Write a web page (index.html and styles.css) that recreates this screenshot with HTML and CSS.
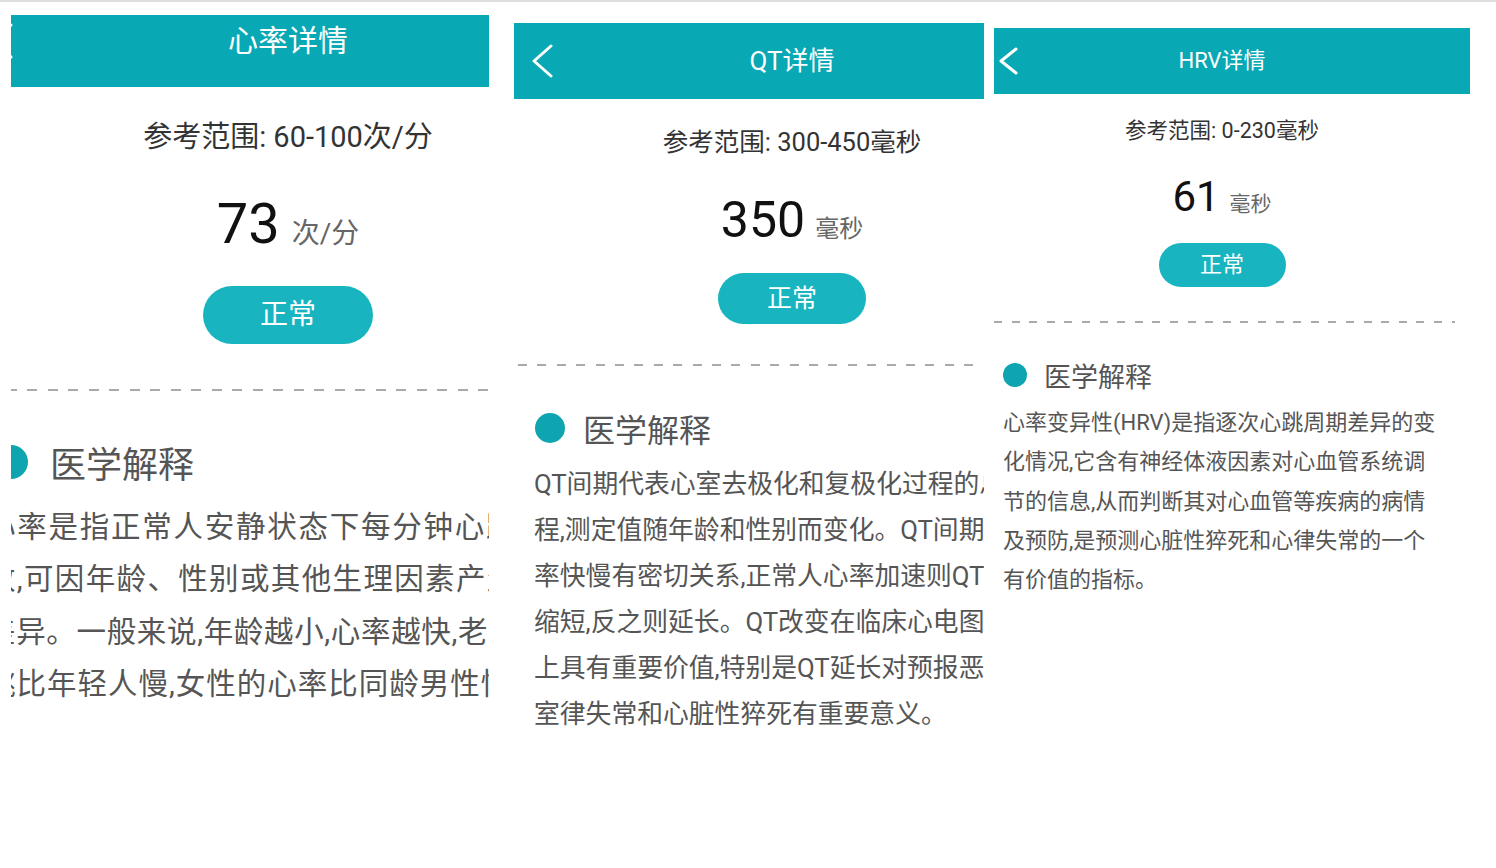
FILE: index.html
```html
<!DOCTYPE html>
<html lang="zh-CN">
<head>
<meta charset="utf-8">
<title>详情</title>
<link rel="stylesheet" href="styles.css">
</head>
<body>
<div class="topline"></div>
<main class="row">
  <section class="panel p1">
    <div class="screen">
      <header class="bar">
        <span class="back"><svg width="24" height="36" viewBox="0 0 24 36"><polyline points="22,2 4,18 22,34" fill="none" stroke="#fff" stroke-width="3" stroke-linecap="round" stroke-linejoin="round"/></svg></span>
        <h1 class="title">心率详情</h1>
        <span></span>
      </header>
      <p class="ref">参考范围: 60-100次/分</p>
      <div class="value"><span class="num">73</span><span class="unit">次/分</span></div>
      <div class="status">正常</div>
      <div class="main">
        <div class="dash"></div>
        <h2 class="sec"><span class="dot"></span>医学解释</h2>
        <div class="body">
          <div class="ln j">心率是指正常人安静状态下每分钟心跳的次</div>
          <div class="ln j">数,可因年龄、性别或其他生理因素产生个体</div>
          <div class="ln j">差异。一般来说,年龄越小,心率越快,老年人心</div>
          <div class="ln last">跳比年轻人慢,女性的心率比同龄男性快。</div>
        </div>
      </div>
    </div>
  </section>

  <section class="panel p2">
    <div class="screen">
      <header class="bar">
        <span class="back"><svg width="24" height="34" viewBox="0 0 24 34"><polyline points="21,2 4,17 21,32" fill="none" stroke="#fff" stroke-width="3" stroke-linecap="round" stroke-linejoin="round"/></svg></span>
        <h1 class="title">QT详情</h1>
        <span></span>
      </header>
      <p class="ref">参考范围: 300-450毫秒</p>
      <div class="value"><span class="num">350</span><span class="unit">毫秒</span></div>
      <div class="status">正常</div>
      <div class="main">
        <div class="dash"></div>
        <h2 class="sec"><span class="dot"></span>医学解释</h2>
        <div class="body">
          <div class="ln">QT间期代表心室去极化和复极化过程的总时</div>
          <div class="ln">程,测定值随年龄和性别而变化。QT间期与心</div>
          <div class="ln">率快慢有密切关系,正常人心率加速则QT间期</div>
          <div class="ln">缩短,反之则延长。QT改变在临床心电图诊断</div>
          <div class="ln">上具有重要价值,特别是QT延长对预报恶性</div>
          <div class="ln">室律失常和心脏性猝死有重要意义。</div>
        </div>
      </div>
    </div>
  </section>

  <section class="panel p3">
    <div class="screen">
      <header class="bar">
        <span class="back"><svg width="20" height="28" viewBox="0 0 20 28"><polyline points="18,2 3,14 18,26" fill="none" stroke="#fff" stroke-width="3" stroke-linecap="round" stroke-linejoin="round"/></svg></span>
        <h1 class="title">HRV详情</h1>
        <span></span>
      </header>
      <p class="ref">参考范围: 0-230毫秒</p>
      <div class="value"><span class="num">61</span><span class="unit">毫秒</span></div>
      <div class="status">正常</div>
      <div class="main">
        <div class="dash"></div>
        <h2 class="sec"><span class="dot"></span>医学解释</h2>
        <div class="body">
          <div class="ln">心率变异性(HRV)是指逐次心跳周期差异的变</div>
          <div class="ln">化情况,它含有神经体液因素对心血管系统调</div>
          <div class="ln">节的信息,从而判断其对心血管等疾病的病情</div>
          <div class="ln">及预防,是预测心脏性猝死和心律失常的一个</div>
          <div class="ln">有价值的指标。</div>
        </div>
      </div>
    </div>
  </section>
</main>
</body>
</html>
```

FILE: styles.css
```css
html, body {
  margin: 0;
  background: #ffffff;
}
body {
  font-family: Roboto, "Noto Sans CJK SC", sans-serif;
  width: 1496px;
  height: 868px;
  overflow: hidden;
}
.topline {
  height: 2px;
  background: #dedede;
}
.row {
  display: flex;
  align-items: flex-start;
}
.panel {
  flex: none;
  overflow: hidden;
}
.screen {
  box-sizing: border-box;
}
.bar {
  display: grid;
  grid-template-columns: 1fr auto 1fr;
  align-items: center;
  background: #08a8b4;
  color: #ffffff;
  box-sizing: border-box;
}
.back {
  display: flex;
  align-items: center;
}
.back svg {
  display: block;
}
.title {
  margin: 0;
  font-weight: 400;
  white-space: nowrap;
}
.ref {
  margin: 0;
  text-align: center;
  color: #333333;
  white-space: nowrap;
}
.value {
  display: flex;
  justify-content: center;
  align-items: baseline;
  white-space: nowrap;
}
.num {
  color: #111111;
}
.unit {
  color: #666666;
}
.status {
  margin-left: auto;
  margin-right: auto;
  background: #18b5c1;
  color: #ffffff;
  text-align: center;
}
.dash {
  height: 2px;
}
.sec {
  display: flex;
  align-items: center;
  margin-bottom: 0;
  font-weight: 400;
  color: #555555;
  white-space: nowrap;
}
.dot {
  flex: none;
  border-radius: 50%;
  background: #0fa5b0;
}
.body {
  color: #555555;
}
.ln {
  white-space: nowrap;
}
.ln.j {
  white-space: normal;
  text-align: justify;
  text-align-last: justify;
}

/* ---------- panel 1 : 心率 ---------- */
.p1 {
  width: 478px;
  margin: 13px 0 0 11px;
}
.p1 .screen {
  width: 648px;
  margin-left: -47px;
}
.p1 .bar {
  height: 72px;
  padding-bottom: 20px;
}
.p1 .back {
  padding-left: 25px;
}
.p1 .title {
  font-size: 30px;
  line-height: 40px;
}
.p1 .ref {
  font-size: 29px;
  line-height: 40px;
  margin-top: 30px;
}
.p1 .value {
  margin-top: 35px;
  height: 64px;
}
.p1 .num {
  font-size: 56px;
  line-height: 64px;
  margin-right: 12px;
}
.p1 .unit {
  font-size: 28px;
  line-height: 30px;
}
.p1 .status {
  width: 170px;
  height: 58px;
  line-height: 58px;
  border-radius: 29px;
  font-size: 28px;
  margin-top: 30px;
}
.p1 .main {
  padding: 0 34px 0 22px;
}
.p1 .dash {
  margin-top: 45px;
  background: repeating-linear-gradient(to right, #aaaaaa 0 10px, transparent 10px 20.5px);
}
.p1 .sec {
  margin-top: 46px;
  height: 50px;
  font-size: 36px;
}
.p1 .dot {
  width: 34px;
  height: 34px;
  margin-left: 8px;
  margin-right: 22px;
}
.p1 .body {
  margin-top: 14px;
  font-size: 29.5px;
  line-height: 52.3px;
}
.p1 .ln.last {
  letter-spacing: 1px;
}

/* ---------- panel 2 : QT ---------- */
.p2 {
  width: 470px;
  margin: 21px 0 0 25px;
}
.p2 .screen {
  width: 556px;
}
.p2 .bar {
  height: 76px;
}
.p2 .back {
  padding-left: 16px;
}
.p2 .title {
  font-size: 26px;
  line-height: 36px;
}
.p2 .ref {
  font-size: 25.5px;
  line-height: 36px;
  margin-top: 25px;
}
.p2 .value {
  margin-top: 32px;
  height: 56px;
}
.p2 .num {
  font-size: 50px;
  line-height: 56px;
  margin-right: 10px;
}
.p2 .unit {
  font-size: 24px;
  line-height: 26px;
}
.p2 .status {
  width: 148px;
  height: 51px;
  line-height: 51px;
  border-radius: 26px;
  font-size: 25px;
  margin-top: 25px;
}
.p2 .main {
  padding: 0 20px;
}
.p2 .dash {
  margin-top: 40px;
  margin-left: -16px;
  background: repeating-linear-gradient(to right, #aaaaaa 0 9px, transparent 9px 19.4px);
}
.p2 .sec {
  margin-top: 40px;
  height: 44px;
  font-size: 32px;
}
.p2 .dot {
  width: 30px;
  height: 30px;
  margin-left: 1px;
  margin-right: 18px;
}
.p2 .body {
  margin-top: 11px;
  font-size: 25.8px;
  line-height: 46px;
}

/* ---------- panel 3 : HRV ---------- */
.p3 {
  width: 476px;
  margin: 26px 0 0 10px;
}
.p3 .screen {
  width: 476px;
  margin-left: -10px;
}
.p3 .bar {
  height: 66px;
  margin-right: -10px;
  padding-right: 10px;
}
.p3 .back {
  padding-left: 14px;
}
.p3 .title {
  font-size: 22px;
  line-height: 30px;
}
.p3 .ref {
  font-size: 21.5px;
  line-height: 32px;
  margin-top: 21px;
}
.p3 .value {
  margin-top: 27px;
  height: 46px;
}
.p3 .num {
  font-size: 42px;
  line-height: 46px;
  margin-right: 10px;
}
.p3 .unit {
  font-size: 21px;
  line-height: 24px;
}
.p3 .status {
  width: 127px;
  height: 44px;
  line-height: 44px;
  border-radius: 22px;
  font-size: 22px;
  margin-top: 23px;
}
.p3 .main {
  padding: 0 19px;
}
.p3 .dash {
  margin-top: 34px;
  margin-left: -19px;
  margin-right: -14px;
  background: repeating-linear-gradient(to right, #aaaaaa 0 8px, transparent 8px 17.6px);
  background-position: 10px 0;
}
.p3 .sec {
  margin-top: 33px;
  height: 38px;
  font-size: 27px;
}
.p3 .dot {
  width: 24px;
  height: 24px;
  margin-right: 17px;
}
.p3 .body {
  margin-top: 9px;
  font-size: 22px;
  line-height: 39.25px;
}
```
